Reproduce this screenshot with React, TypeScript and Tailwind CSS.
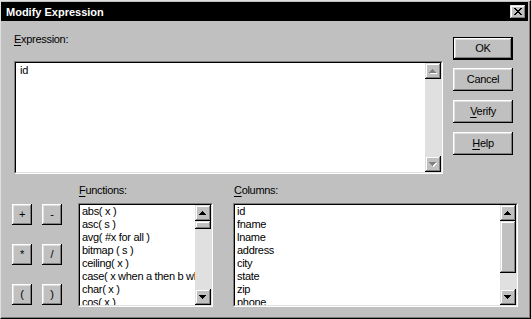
import React from "react";

const font = { fontFamily: '"Liberation Sans", Arial, Helvetica, sans-serif' };

const btnBevel =
  "shadow-[inset_-1px_-1px_#000,inset_1px_1px_#fff,inset_-2px_-2px_#808080,inset_2px_2px_#dfdfdf]";
const sbBevel =
  "shadow-[inset_-1px_-1px_#000,inset_1px_1px_#dfdfdf,inset_-2px_-2px_#808080,inset_2px_2px_#fff]";

function Arrow({ dir, disabled }: { dir: "up" | "down"; disabled?: boolean }) {
  const rows: [number, number][] = [
    [3, 1],
    [2, 3],
    [1, 5],
    [0, 7],
  ];
  const r = dir === "up" ? rows : [...rows].reverse();
  return (
    <svg width="8" height="5" viewBox="0 0 8 5" shapeRendering="crispEdges">
      {disabled &&
        r.map(([x, w], i) => (
          <rect key={"s" + i} x={x + 1} y={i + 1} width={w} height={1} fill="#ffffff" />
        ))}
      {r.map(([x, w], i) => (
        <rect key={i} x={x} y={i} width={w} height={1} fill={disabled ? "#808080" : "#000000"} />
      ))}
    </svg>
  );
}

function ScrollButton({ dir, disabled }: { dir: "up" | "down"; disabled?: boolean }) {
  return (
    <div className={`w-[16px] h-[16px] shrink-0 bg-[#c0c0c0] flex items-center justify-center ${sbBevel}`}>
      <Arrow dir={dir} disabled={disabled} />
    </div>
  );
}

function ScrollBar({ disabled, thumb }: { disabled?: boolean; thumb?: number }) {
  return (
    <div className="w-[16px] h-full shrink-0 flex flex-col bg-[#e0e0e0]">
      <ScrollButton dir="up" disabled={disabled} />
      <div className="flex-1 flex flex-col">
        {thumb ? (
          <div className={`w-[16px] bg-[#c0c0c0] ${sbBevel}`} style={{ height: thumb }} />
        ) : null}
      </div>
      <ScrollButton dir="down" disabled={disabled} />
    </div>
  );
}

function Sunken({ className, children }: { className?: string; children?: React.ReactNode }) {
  return (
    <div
      className={`border border-t-[#808080] border-l-[#808080] border-r-white border-b-white ${className ?? ""}`}
    >
      <div className="h-full border border-t-black border-l-black border-r-[#dfdfdf] border-b-[#dfdfdf] bg-white flex overflow-hidden">
        {children}
      </div>
    </div>
  );
}

function PushButton({ children, isDefault }: { children: React.ReactNode; isDefault?: boolean }) {
  if (isDefault) {
    return (
      <div className="w-[60px] h-[23px] border border-black">
        <div className={`w-full h-full bg-[#c0c0c0] flex items-center justify-center ${btnBevel}`}>
          {children}
        </div>
      </div>
    );
  }
  return (
    <div className={`w-[60px] h-[23px] bg-[#c0c0c0] flex items-center justify-center ${btnBevel}`}>
      {children}
    </div>
  );
}

function OpButton({ children }: { children: React.ReactNode }) {
  return (
    <div className={`w-[20px] h-[21px] bg-[#c0c0c0] flex items-center justify-center ${btnBevel}`}>
      {children}
    </div>
  );
}

function CloseButton() {
  const px: [number, number, number][] = [
    [0, 0, 2],
    [6, 0, 2],
    [1, 1, 2],
    [5, 1, 2],
    [2, 2, 4],
    [3, 3, 2],
    [2, 4, 4],
    [1, 5, 2],
    [5, 5, 2],
    [0, 6, 2],
    [6, 6, 2],
  ];
  return (
    <div className={`mt-[3px] w-[16px] h-[14px] bg-[#c0c0c0] flex items-center justify-center ${sbBevel}`}>
      <svg width="8" height="7" viewBox="0 0 8 7" shapeRendering="crispEdges" className="-mt-px">
        {px.map(([x, y, w], i) => (
          <rect key={i} x={x} y={y} width={w} height={1} fill="#000" />
        ))}
      </svg>
    </div>
  );
}

const functions = [
  "abs( x )",
  "asc( s )",
  "avg( #x for all )",
  "bitmap ( s )",
  "ceiling( x )",
  "case( x when a then b when c then d else e end )",
  "char( x )",
  "cos( x )",
];

const columns = ["id", "fname", "lname", "address", "city", "state", "zip", "phone"];

function ListBox({ items, thumb, className }: { items: string[]; thumb: number; className: string }) {
  return (
    <Sunken className={className}>
      <div className="flex-1 min-w-0 overflow-hidden pl-[2px]">
        {items.map((it) => (
          <div key={it} className="h-[13px] whitespace-nowrap">
            {it}
          </div>
        ))}
      </div>
      <ScrollBar thumb={thumb} />
    </Sunken>
  );
}

export default function App() {
  return (
    <div
      className="w-[531px] h-[319px] bg-[#c0c0c0] border border-t-[#dfdfdf] border-l-[#dfdfdf] border-r-black border-b-black text-[11px] leading-[13px] tracking-[-0.3px] text-black select-none"
      style={font}
    >
      <div className="h-full flex flex-col border-r border-b border-r-[#808080] border-b-[#808080] pr-px pt-px">
        {/* Title bar */}
        <div className="h-[19px] shrink-0 bg-black flex items-start justify-between pl-[5px] pr-[2px]">
          <span className="mt-[4px] text-white font-bold tracking-normal text-[11px] leading-[13px]">
            Modify Expression
          </span>
          <CloseButton />
        </div>

        {/* Top section */}
        <div className="flex items-start">
          <div className="pl-[13px] pt-[12px] flex flex-col">
            <div className="h-[13px]">
              <span className="underline underline-offset-2">E</span>xpression:
            </div>
            <Sunken className="mt-[15px] w-[429px] h-[113px]">
              <div className="flex-1 pl-[4px] pt-[1px]">id</div>
              <ScrollBar disabled />
            </Sunken>
          </div>
          <div className="ml-[10px] pt-[16px] flex flex-col gap-[9px]">
            <PushButton isDefault>OK</PushButton>
            <div className="-mt-px">
              <PushButton>Cancel</PushButton>
            </div>
            <PushButton>
              <span>
                <span className="underline underline-offset-2">V</span>erify
              </span>
            </PushButton>
            <PushButton>
              <span>
                <span className="underline underline-offset-2">H</span>elp
              </span>
            </PushButton>
          </div>
        </div>

        {/* Bottom section */}
        <div className="flex items-start">
          <div className="pl-[11px] pt-[30px] grid grid-cols-[20px_20px] gap-x-[10px] gap-y-[19px]">
            <OpButton>+</OpButton>
            <OpButton>-</OpButton>
            <OpButton>*</OpButton>
            <OpButton>/</OpButton>
            <OpButton>(</OpButton>
            <OpButton>)</OpButton>
          </div>
          <div className="ml-[16px] pt-[10px] flex flex-col">
            <div className="h-[13px] pl-px">
              <span className="underline underline-offset-2">F</span>unctions:
            </div>
            <ListBox items={functions} thumb={8} className="mt-[6px] w-[135px] h-[104px]" />
          </div>
          <div className="ml-[20px] pt-[10px] flex flex-col">
            <div className="h-[13px] pl-px">
              <span className="underline underline-offset-2">C</span>olumns:
            </div>
            <ListBox items={columns} thumb={52} className="mt-[6px] w-[285px] h-[104px]" />
          </div>
        </div>
      </div>
    </div>
  );
}
